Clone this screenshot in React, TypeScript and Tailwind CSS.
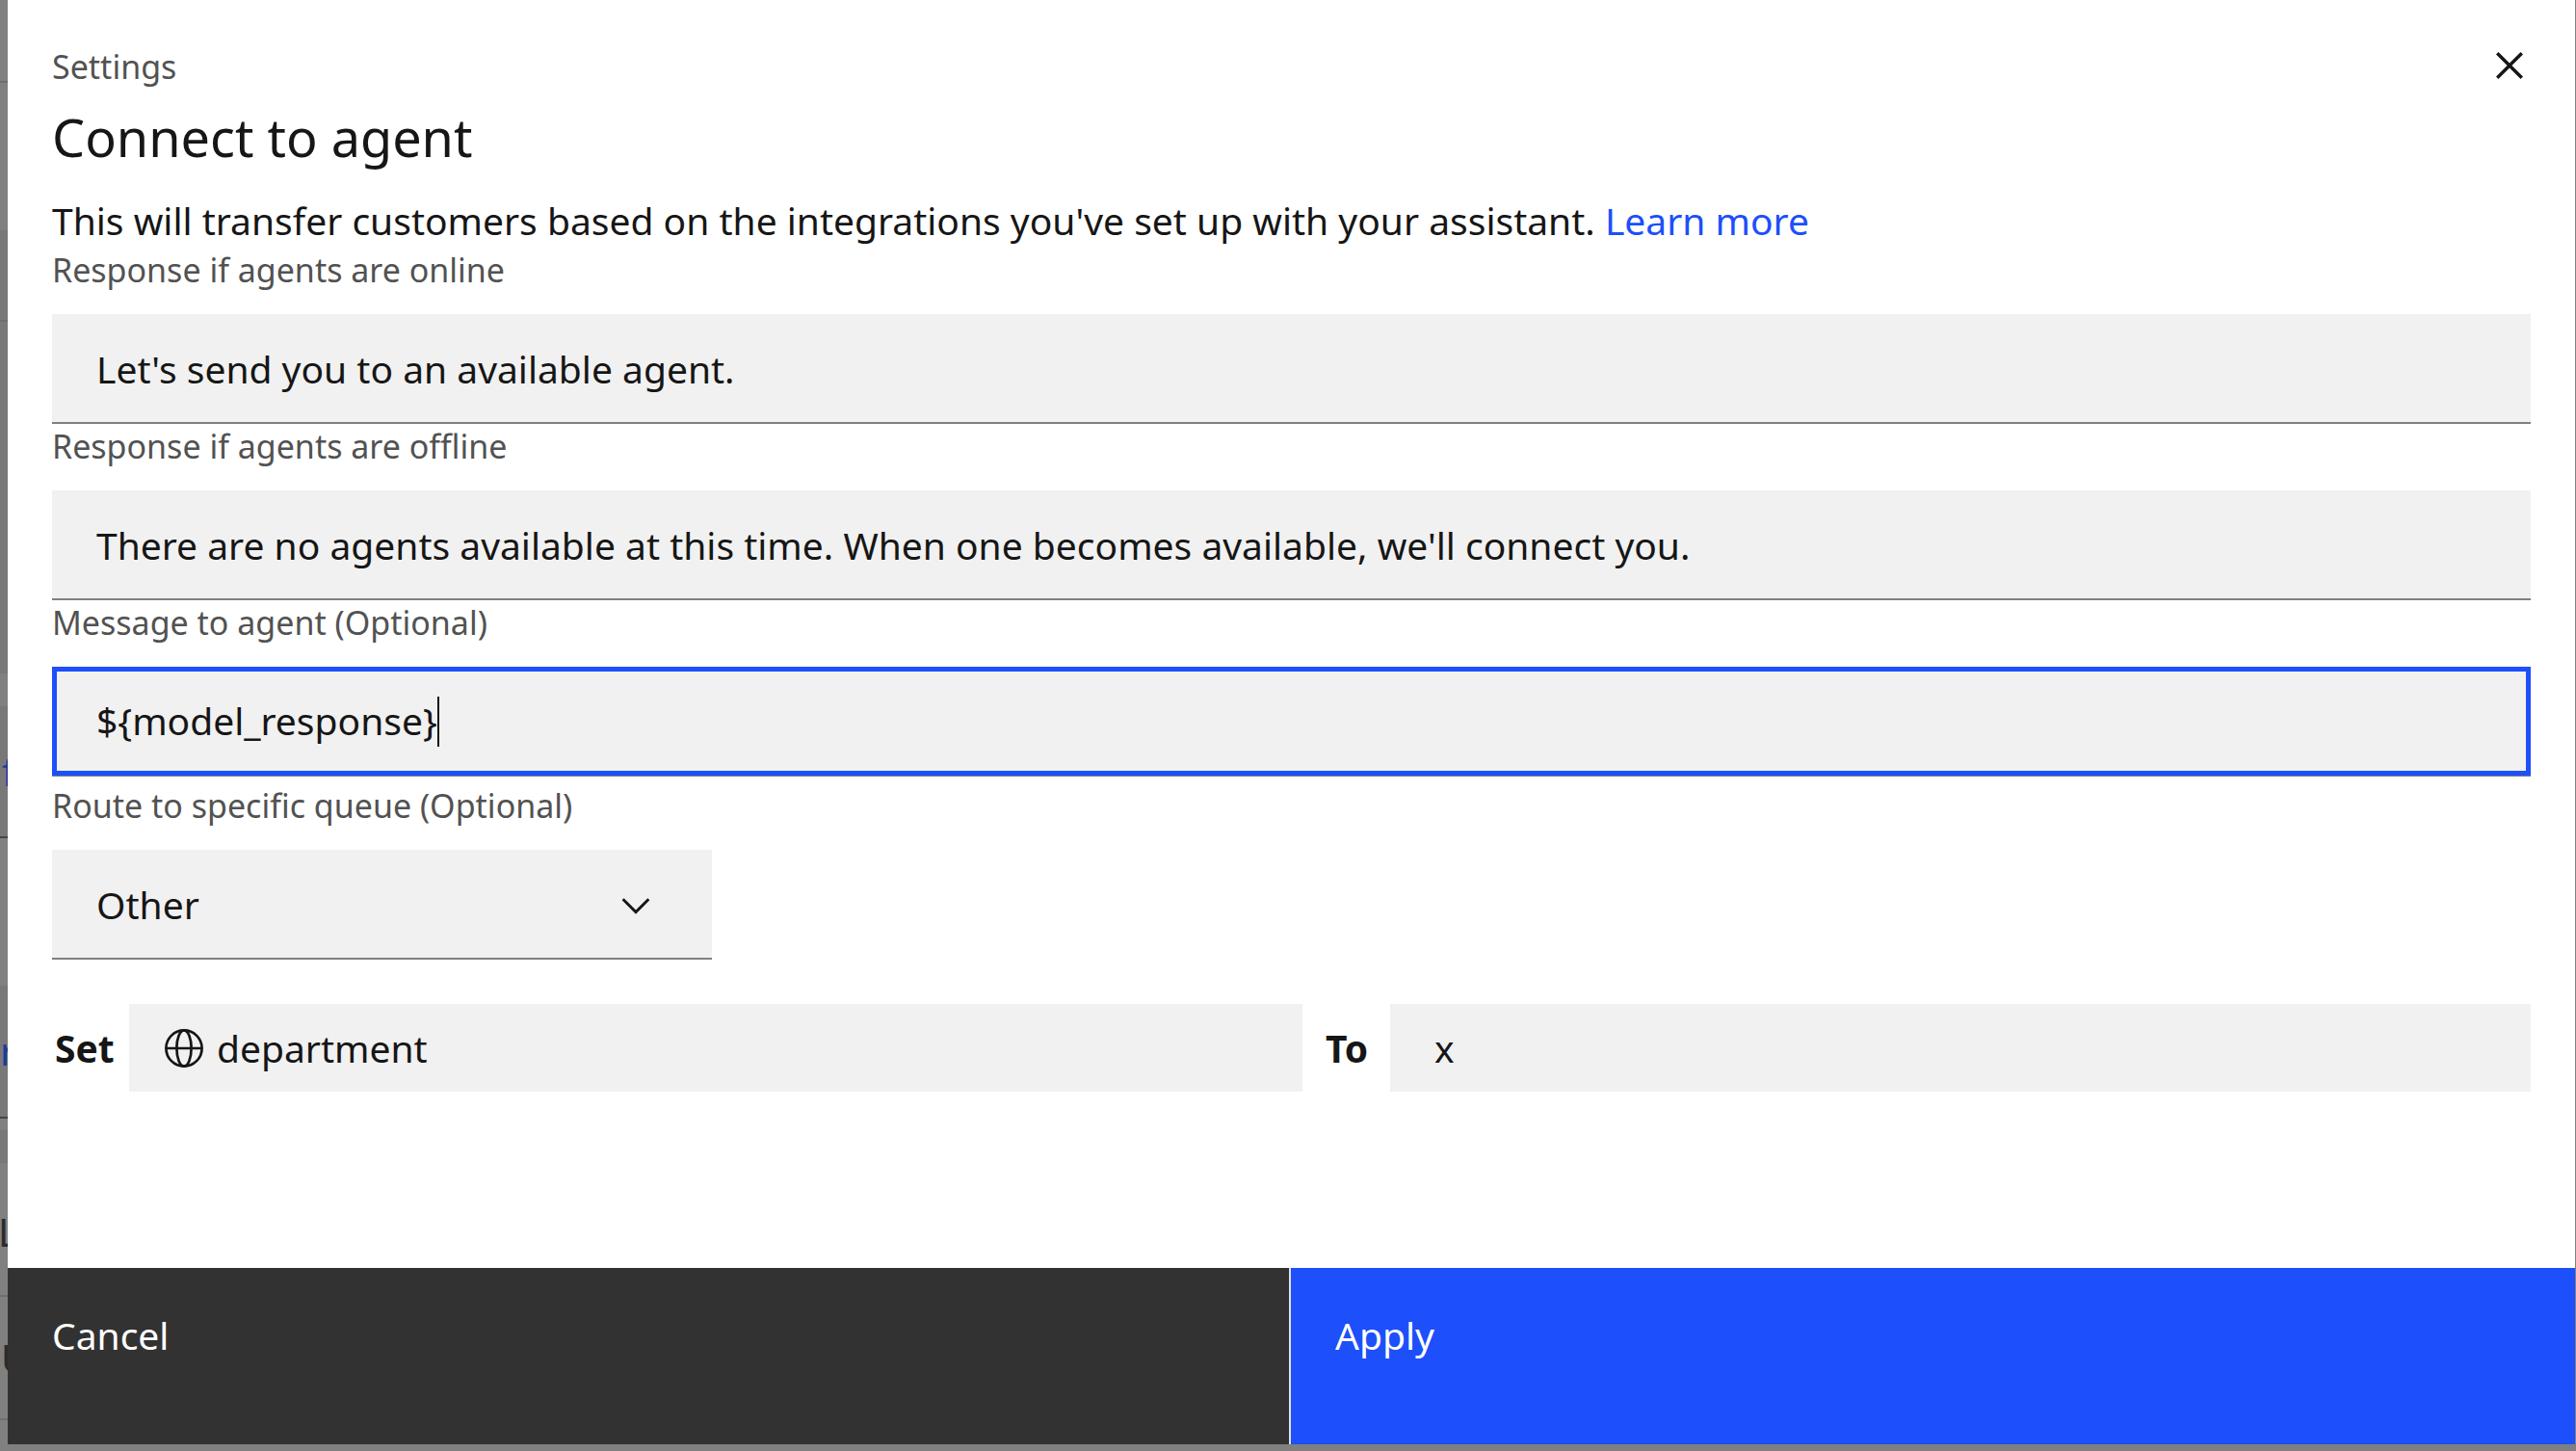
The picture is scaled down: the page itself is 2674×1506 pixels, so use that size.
import { useState } from 'react';

const labelClass = 'block pt-0.5 pb-6 text-[34px] leading-[43px] text-[#525252]';
const fieldClass =
  'block h-[114px] w-full rounded-none border-b-2 border-[#808080] bg-[#f1f1f1] px-[46px] text-[39px] outline-none';

type Strip = { h: string; tone: string; line?: string; text?: string; textClass?: string };

/* The edge of the dimmed page that shows beside the dialog. */
const strips: Strip[] = [
  { h: 'h-[86px]', tone: 'bg-[#808080]', line: 'border-[#6f6f6f]' },
  { h: 'h-[153px]', tone: 'bg-[#808080]' },
  { h: 'h-[95px]', tone: 'bg-[#787878]', line: 'border-[#6f6f6f]' },
  { h: 'h-[365px]', tone: 'bg-[#787878]' },
  { h: 'h-[34px]', tone: 'bg-[#808080]' },
  { h: 'h-[137px]', tone: 'bg-[#787878]', line: 'border-[#464646]', text: 'f', textClass: 'pl-0.5 pt-10 text-[#1c3c98]' },
  { h: 'h-[153px]', tone: 'bg-[#808080]' },
  { h: 'h-[138px]', tone: 'bg-[#787878]', line: 'border-[#464646]', text: 'r', textClass: 'pt-10 text-[#1c3c98]' },
  { h: 'h-3', tone: 'bg-[#808080]' },
  { h: 'h-[34px]', tone: 'bg-[#787878]' },
  { h: 'h-[139px]', tone: 'bg-[#808080]', line: 'border-[#6f6f6f]', text: 'L', textClass: '-ml-0.5 pt-11 text-[#2b2b2b]' },
  { h: 'h-32', tone: 'bg-[#808080]', line: 'border-[#6f6f6f]', text: 'U', textClass: 'pl-px pt-9 text-[#2b2b2b]' },
  { h: 'flex-1', tone: 'bg-[#808080]' },
];

function PageEdge() {
  return (
    <div aria-hidden="true" className="flex w-2 shrink-0 flex-col overflow-hidden">
      {strips.map((s, i) => (
        <div key={i} className={`${s.h} ${s.tone} ${s.line ? `border-b-2 ${s.line}` : ''} shrink-0 overflow-hidden`}>
          {s.text && <span className={`block text-[40px] leading-[56px] ${s.textClass}`}>{s.text}</span>}
        </div>
      ))}
    </div>
  );
}

function CloseIcon() {
  return (
    <svg viewBox="0 0 32 32" className="size-14" fill="currentColor" aria-hidden="true">
      <path d="M24 9.4 22.6 8 16 14.6 9.4 8 8 9.4 14.6 16 8 22.6 9.4 24 16 17.4 22.6 24 24 22.6 17.4 16z" />
    </svg>
  );
}

function ChevronIcon() {
  return (
    <svg viewBox="0 0 16 16" className="pointer-events-none absolute right-14 top-[35px] size-[46px]" fill="currentColor" aria-hidden="true">
      <path d="M8 11L3 6l.7-.7L8 9.6l4.3-4.3.7.7z" />
    </svg>
  );
}

function GlobeIcon() {
  return (
    <svg viewBox="0 0 40 40" className="size-10 shrink-0" fill="none" stroke="currentColor" strokeWidth="2.7" aria-hidden="true">
      <circle cx="20" cy="20" r="18.6" />
      <path d="M1.4 20h37.2" />
      <ellipse cx="20" cy="20" rx="7.6" ry="18.6" />
    </svg>
  );
}

export default function App() {
  const [online, setOnline] = useState("Let's send you to an available agent.");
  const [offline, setOffline] = useState(
    "There are no agents available at this time. When one becomes available, we'll connect you.",
  );
  const [message, setMessage] = useState('${model_response}');
  const [value, setValue] = useState('x');

  return (
    <div className="flex min-h-screen bg-[#808080] text-[#161616] [font-family:'Noto_Sans',sans-serif]">
      <PageEdge />
      <div role="dialog" aria-labelledby="title" className="mr-px mb-[7px] flex flex-1 flex-col bg-white">
        <div className="flex-1 px-[46px] pt-12 pb-12">
          <header className="flex items-start justify-between">
            <div>
              <p className="text-[34px] leading-[43px] text-[#525252]">Settings</p>
              <h1 id="title" className="mt-4 text-[54px] leading-[70px]">
                Connect to agent
              </h1>
            </div>
            <button type="button" aria-label="Close" className="-mt-2 -mr-1.5">
              <CloseIcon />
            </button>
          </header>

          <p className="pt-6 text-[39px] leading-[56px]">
            This will transfer customers based on the integrations you've set up with your assistant.{' '}
            <a href="#learn-more" className="text-[#1d4ffa]">
              Learn more
            </a>
          </p>

          <div>
            <label htmlFor="online" className={labelClass}>
              Response if agents are online
            </label>
            <input id="online" type="text" value={online} onChange={(e) => setOnline(e.target.value)} className={fieldClass} />
          </div>

          <div>
            <label htmlFor="offline" className={labelClass}>
              Response if agents are offline
            </label>
            <input id="offline" type="text" value={offline} onChange={(e) => setOffline(e.target.value)} className={fieldClass} />
          </div>

          <div>
            <label htmlFor="message" className={labelClass}>
              Message to agent (Optional)
            </label>
            <div className="border-b border-[#808080]">
              <div className="flex h-[113px] items-center border-[5px] border-[#1d4ffa] bg-[#f1f1f1] px-[41px]">
                <input
                  id="message"
                  type="text"
                  value={message}
                  onChange={(e) => setMessage(e.target.value)}
                  className="field-sizing-content text-[39px] caret-transparent outline-none"
                />
                <span aria-hidden="true" className="h-[52px] w-0.5 bg-[#161616]" />
              </div>
            </div>
          </div>

          <div className="mt-[7px]">
            <label htmlFor="queue" className={labelClass}>
              Route to specific queue (Optional)
            </label>
            <div className="relative w-[685px]">
              <select id="queue" defaultValue="other" className={`${fieldClass} appearance-none pt-0.5`}>
                <option value="other">Other</option>
              </select>
              <ChevronIcon />
            </div>
          </div>

          <div className="mt-[46px] grid grid-cols-[80px_1218fr_91px_1184fr] items-center text-[39px]">
            <span id="set-label" className="pl-[3px] pt-0.5 font-bold">
              Set
            </span>
            <button
              type="button"
              aria-labelledby="set-label variable"
              className="flex h-[91px] items-center gap-3.5 bg-[#f1f1f1] pl-[37px] text-left"
            >
              <GlobeIcon />
              <span id="variable" className="pt-0.5">
                department
              </span>
            </button>
            <label htmlFor="value" className="pl-6 pt-0.5 font-bold">
              To
            </label>
            <input
              id="value"
              type="text"
              value={value}
              onChange={(e) => setValue(e.target.value)}
              className="h-[91px] w-full min-w-0 bg-[#f1f1f1] px-[46px] outline-none"
            />
          </div>
        </div>

        <footer className="grid h-[183px] grid-cols-[1332fr_1333fr] text-[39px] leading-[56px] text-white">
          <button type="button" className="flex items-start border-r-2 border-[#e0e0e0] bg-[#323232] px-[46px] pt-[42px]">
            Cancel
          </button>
          <button type="button" className="flex items-start bg-[#1d4ffa] px-[46px] pt-[42px]">
            Apply
          </button>
        </footer>
      </div>
    </div>
  );
}
